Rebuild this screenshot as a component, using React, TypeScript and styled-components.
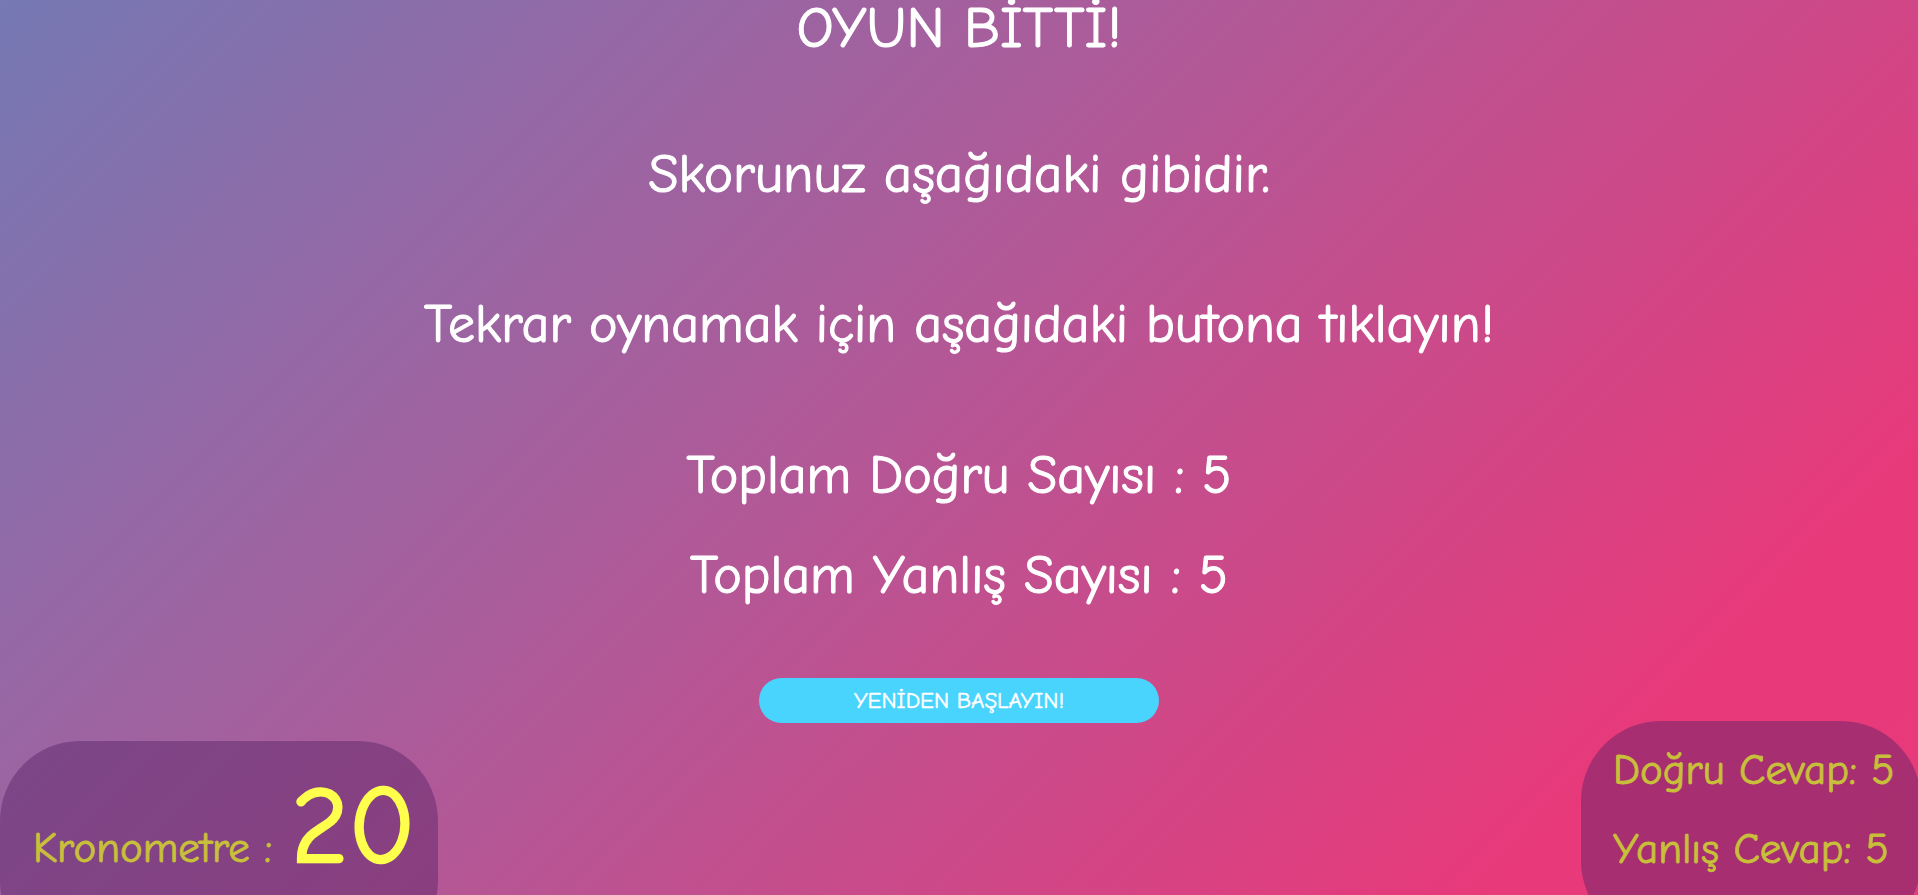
import React from "react";
import styled, { createGlobalStyle } from "styled-components";

const GlobalStyle = createGlobalStyle`
  html, body {
    margin: 0;
    padding: 0;
  }
  body {
    font-family: "Comic Sans MS", "Comic Neue", "Open Sans", sans-serif;
  }
`;

const Page = styled.div`
  height: 895px;
  width: 100%;
  overflow: hidden;
  display: grid;
  grid-template-rows: 721px 1fr;
  background: linear-gradient(135deg, #7579b4 0%, #b65695 48%, #e8397a 85%, #e83b7a 100%);
  color: #ffffff;
`;

const Main = styled.main`
  display: flex;
  flex-direction: column;
  align-items: center;
  text-align: center;
`;

const Line = styled.div<{ $size: number; $top: number }>`
  font-size: ${(p) => p.$size}px;
  line-height: ${(p) => p.$size}px;
  margin-top: ${(p) => p.$top}px;
  color: #ffffff;
  white-space: nowrap;
  -webkit-text-stroke: 1.1px #ffffff;
`;

const RestartButton = styled.button`
  margin-top: 75px;
  width: 400px;
  height: 45px;
  border: none;
  border-radius: 23px;
  background: #48d4fd;
  color: #ffffff;
  font-family: inherit;
  font-size: 23px;
  line-height: 45px;
  padding: 0;
  cursor: pointer;
  -webkit-text-stroke: 0.5px #ffffff;
`;

const Footer = styled.footer`
  display: flex;
  justify-content: space-between;
  align-items: flex-start;
`;

const TimerBox = styled.div`
  margin-top: 20px;
  width: 438px;
  height: 220px;
  border-radius: 80px;
  background: rgba(84, 32, 100, 0.44);
  display: flex;
  align-items: baseline;
  gap: 19px;
  padding: 31px 0 0 33px;
  box-sizing: border-box;
`;

const TimerLabel = styled.span`
  font-size: 43px;
  line-height: 43px;
  color: #c8bf3a;
  -webkit-text-stroke: 0.9px #c8bf3a;
`;

const TimerValue = styled.span`
  font-size: 110px;
  line-height: 110px;
  color: #ffff4d;
  -webkit-text-stroke: 2.5px #ffff4d;
`;

const ScoreBox = styled.div`
  width: 340px;
  height: 220px;
  margin-right: -3px;
  border-radius: 80px;
  background: rgba(84, 32, 100, 0.44);
  padding: 10px 0 0 32px;
  box-sizing: border-box;
  display: flex;
  flex-direction: column;
`;

const ScoreLine = styled.div`
  font-size: 43px;
  line-height: 79px;
  color: #c8bf3a;
  white-space: nowrap;
  -webkit-text-stroke: 0.9px #c8bf3a;
`;

export default function App() {
  return (
    <>
      <GlobalStyle />
      <Page>
        <Main>
          <Line $size={58} $top={0}>OYUN BİTTİ!</Line>
          <Line $size={55} $top={89}>Skorunuz aşağıdaki gibidir.</Line>
          <Line $size={54} $top={96}>Tekrar oynamak için aşağıdaki butona tıklayın!</Line>
          <Line $size={54} $top={97}>Toplam Doğru Sayısı : 5</Line>
          <Line $size={54} $top={46}>Toplam Yanlış Sayısı : 5</Line>
          <RestartButton>YENİDEN BAŞLAYIN!</RestartButton>
        </Main>
        <Footer>
          <TimerBox>
            <TimerLabel>Kronometre :</TimerLabel>
            <TimerValue>20</TimerValue>
          </TimerBox>
          <ScoreBox>
            <ScoreLine>Doğru Cevap: 5</ScoreLine>
            <ScoreLine>Yanlış Cevap: 5</ScoreLine>
          </ScoreBox>
        </Footer>
      </Page>
    </>
  );
}
